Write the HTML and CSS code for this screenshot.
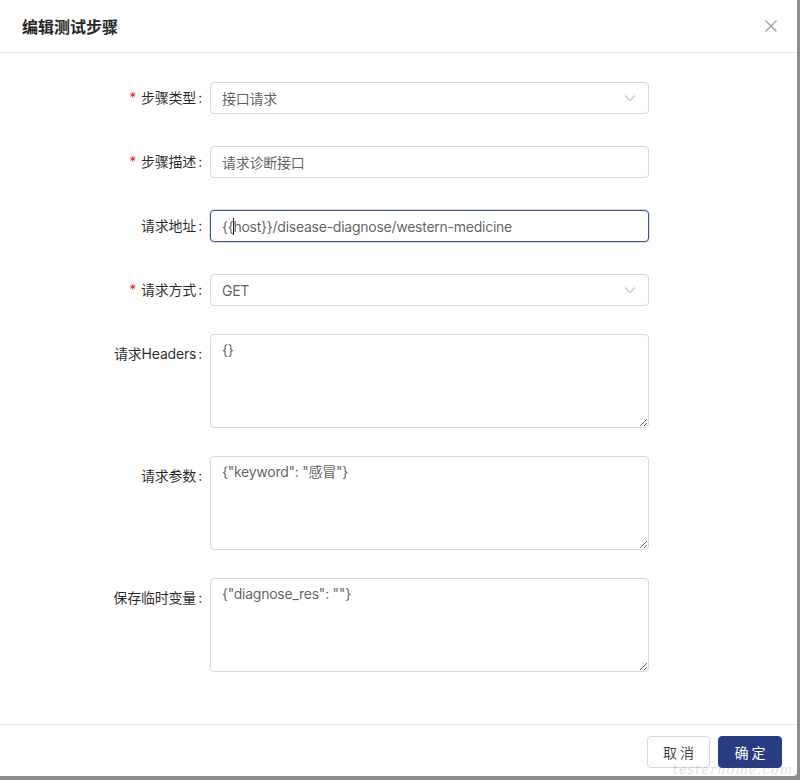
FILE: index.html
```html
<!DOCTYPE html>
<html lang="zh-CN">
<head>
<meta charset="utf-8">
<title>编辑测试步骤</title>
<link rel="stylesheet" href="styles.css">
</head>
<body>
<div class="modal">
  <div class="modal-header">
    <div class="modal-title">编辑测试步骤</div>
    <span class="close" aria-label="关闭">
      <svg width="14" height="14" viewBox="0 0 14 14"><path d="M1.5 1.5 L12.5 12.5 M12.5 1.5 L1.5 12.5" stroke="#9a9a9a" stroke-width="1.2" fill="none"/></svg>
    </span>
  </div>
  <div class="modal-body">
    <div class="form-row">
      <label class="form-label"><span class="req">*</span>步骤类型<span class="colon">:</span></label>
      <div class="control select">
        <span class="value">接口请求</span>
        <svg class="arrow" width="12" height="8" viewBox="0 0 12 8"><polyline points="1,1.5 6,6.5 11,1.5" stroke="#c4c4c4" stroke-width="1.1" fill="none"/></svg>
      </div>
    </div>
    <div class="form-row">
      <label class="form-label"><span class="req">*</span>步骤描述<span class="colon">:</span></label>
      <div class="control input"><span class="value">请求诊断接口</span></div>
    </div>
    <div class="form-row">
      <label class="form-label">请求地址<span class="colon">:</span></label>
      <div class="control input focused"><span class="value">{{<span class="caret"></span>host}}/disease-diagnose/western-medicine</span></div>
    </div>
    <div class="form-row row-last-input">
      <label class="form-label"><span class="req">*</span>请求方式<span class="colon">:</span></label>
      <div class="control select">
        <span class="value">GET</span>
        <svg class="arrow" width="12" height="8" viewBox="0 0 12 8"><polyline points="1,1.5 6,6.5 11,1.5" stroke="#c4c4c4" stroke-width="1.1" fill="none"/></svg>
      </div>
    </div>
    <div class="form-row area-row">
      <label class="form-label">请求Headers<span class="colon">:</span></label>
      <textarea class="control textarea" readonly>{}</textarea>
    </div>
    <div class="form-row area-row">
      <label class="form-label">请求参数<span class="colon">:</span></label>
      <textarea class="control textarea" readonly>{"keyword": "感冒"}</textarea>
    </div>
    <div class="form-row area-row">
      <label class="form-label">保存临时变量<span class="colon">:</span></label>
      <textarea class="control textarea" readonly>{"diagnose_res": ""}</textarea>
    </div>
  </div>
  <div class="modal-footer">
    <button class="btn">取 消</button>
    <button class="btn btn-primary">确 定</button>
  </div>
  <div class="watermark">testerhome.com</div>
</div>
</body>
</html>
```
FILE: styles.css
```css
html, body {
  margin: 0;
  padding: 0;
}
body {
  width: 800px;
  height: 780px;
  background: #8d8d8d;
  font-family: "Inter", "Noto Sans CJK SC", sans-serif;
  font-size: 14px;
  color: rgba(0, 0, 0, 0.85);
}
.modal {
  position: relative;
  width: 797px;
  height: 776px;
  background: #fff;
  border-radius: 0 0 4px 0;
  display: flex;
  flex-direction: column;
  overflow: hidden;
}
.modal-header {
  height: 53px;
  flex: none;
  box-sizing: border-box;
  border-bottom: 1px solid #e8e8e8;
  padding: 0 19px 0 22px;
  display: flex;
  align-items: center;
  justify-content: space-between;
}
.modal-title {
  font-family: "Noto Sans CJK SC", sans-serif;
  font-size: 16px;
  font-weight: 600;
  color: #262626;
  line-height: 22px;
}
.close {
  display: flex;
  width: 14px;
  height: 14px;
}
.modal-body {
  flex: 1;
  padding-top: 29px;
}
.form-row {
  display: grid;
  grid-template-columns: 202px 439px;
  grid-template-rows: 32px;
  column-gap: 8px;
  align-items: start;
  margin-bottom: 32px;
}
.form-row.row-last-input {
  margin-bottom: 28px;
}
.form-row.area-row {
  grid-template-rows: 94px;
  margin-bottom: 28px;
}
.form-label {
  display: block;
  height: 32px;
  overflow: visible;
  text-align: right;
  line-height: 32px;
  white-space: nowrap;
  letter-spacing: -0.2px;
  color: rgba(0, 0, 0, 0.85);
  font-family: "Inter", "Noto Sans CJK SC", sans-serif;
}
.area-row .form-label {
  margin-top: 4px;
}
.req {
  color: #f5222d;
  margin-right: 5px;
  font-size: 14px;
}
.colon {
  margin-left: 2px;
}
.control {
  box-sizing: border-box;
  border: 1px solid #d9d9d9;
  border-radius: 4px;
  background: #fff;
  color: rgba(0, 0, 0, 0.65);
  font-family: "Inter", "Noto Sans CJK SC", sans-serif;
  font-size: 14px;
  letter-spacing: -0.25px;
}
.input, .select {
  height: 32px;
  padding: 0 11px;
  display: flex;
  align-items: center;
  justify-content: space-between;
}
.value {
  white-space: nowrap;
}
.focused {
  border-color: #3b4f8f;
  box-shadow: 0 0 0 1px rgba(43, 63, 126, 0.15);
}
.caret {
  display: inline-block;
  width: 1px;
  height: 17px;
  background: #222;
  vertical-align: -3px;
  margin-right: -1px;
}
.arrow {
  margin-right: 1px;
}
.textarea {
  display: block;
  width: 439px;
  height: 94px;
  padding: 4px 11px;
  line-height: 1.5;
  resize: vertical;
  outline: none;
  margin: 0;
}
.modal-footer {
  height: 52px;
  flex: none;
  box-sizing: border-box;
  border-top: 1px solid #e8e8e8;
  padding: 11px 15px 0 0;
  display: flex;
  align-items: flex-start;
  justify-content: flex-end;
  gap: 8px;
}
.btn {
  height: 32px;
  width: 63px;
  box-sizing: border-box;
  border: 1px solid #d9d9d9;
  border-radius: 4px;
  background: #fff;
  color: rgba(0, 0, 0, 0.75);
  font-family: "Noto Sans CJK SC", sans-serif;
  font-size: 14px;
  line-height: 20px;
  padding: 0;
  cursor: pointer;
}
.btn-primary {
  width: 64px;
  background: #283c82;
  border-color: #283c82;
  color: #fff;
}
.watermark {
  position: absolute;
  right: 4px;
  bottom: 0;
  font-family: "DejaVu Serif", serif;
  font-style: italic;
  font-size: 13px;
  line-height: 13px;
  letter-spacing: 1px;
  color: rgba(120, 120, 120, 0.25);
  pointer-events: none;
}
```
